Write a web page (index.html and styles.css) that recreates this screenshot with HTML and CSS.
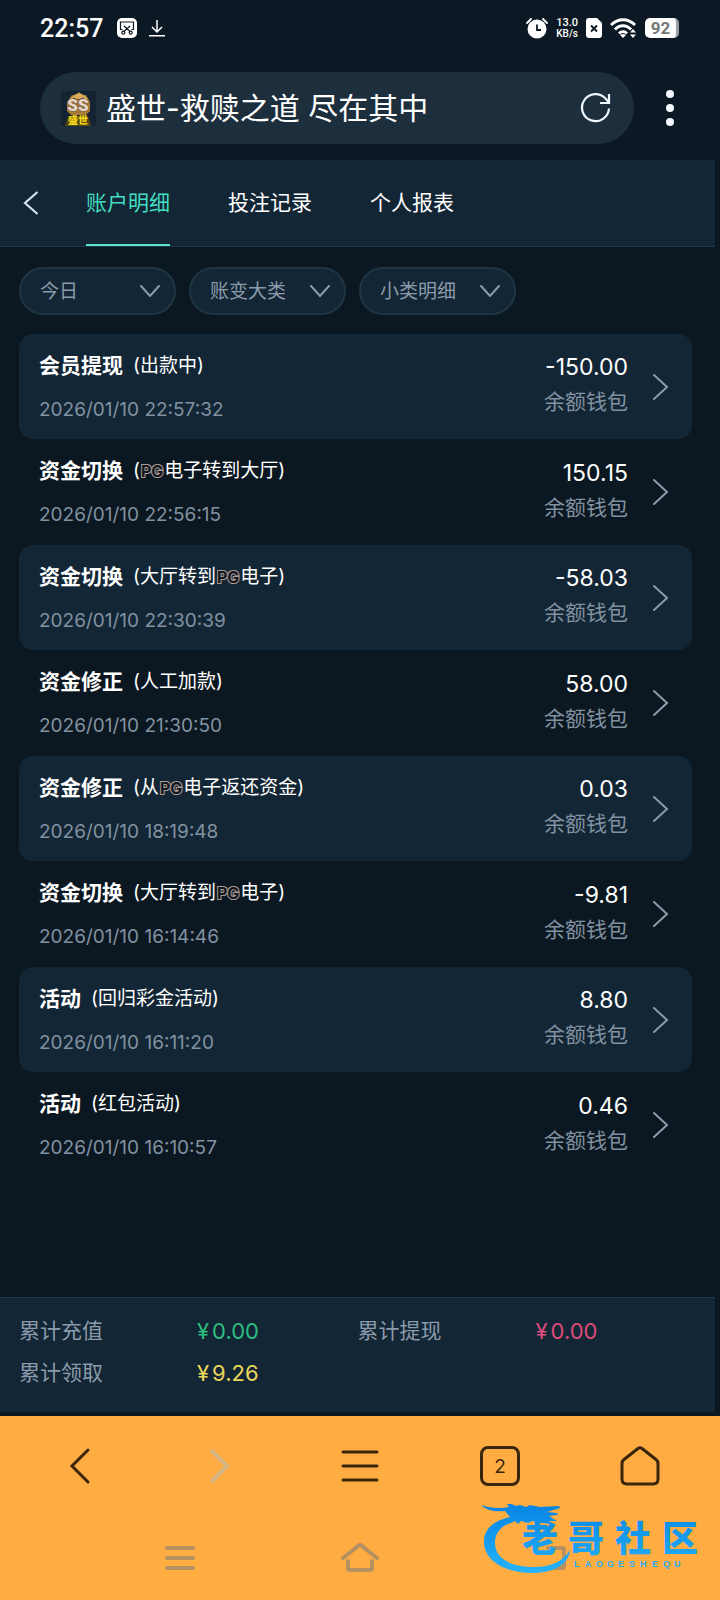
FILE: index.html
```html
<!DOCTYPE html>
<html lang="zh-CN">
<head>
<meta charset="UTF-8">
<meta name="viewport" content="width=device-width, initial-scale=1.0">
<title>账户明细</title>
<link rel="stylesheet" href="styles.css">
</head>
<body>

<div class="status-bar">
    <span class="clock">22:57</span>
    <svg class="clip-icon" width="20" height="20" viewBox="0 0 20 20">
        <rect width="20" height="20" rx="5" fill="#fff"/>
        <g fill="none" stroke="#0c1823" stroke-width="1.2">
            <path d="M5.5 11.5H3.5V4h13v7.5h-2M7 8l6 5.5M13 8l-6 5.5"/>
            <circle cx="6.3" cy="14.7" r="1.5"/><circle cx="13.7" cy="14.7" r="1.5"/>
        </g>
    </svg>
    <svg width="16" height="18" viewBox="0 0 16 18" fill="none" stroke="#fff" stroke-width="1.5">
        <path d="M8 1v12M3 8l5 5 5-5M0 16.7h16"/>
    </svg>
    <div class="status-right">
        <svg width="22" height="21" viewBox="0 0 22 21">
            <circle cx="11" cy="11" r="9.5" fill="#fff"/>
            <path d="M1 5l4-4M21 5l-4-4" stroke="#fff" stroke-width="1.8" stroke-linecap="round"/>
            <path d="M11 6.5V12h4" fill="none" stroke="#0c1823" stroke-width="1.8"/>
        </svg>
        <span class="net-speed"><b>13.0</b><span>KB/s</span></span>
        <svg width="16" height="20" viewBox="0 0 16 20">
            <path d="M3 0h8l5 5v12a3 3 0 0 1-3 3H3a3 3 0 0 1-3-3V3a3 3 0 0 1 3-3z" fill="#fff"/>
            <path d="M5 7.5l6 6M11 7.5l-6 6" stroke="#0c1823" stroke-width="1.8"/>
        </svg>
        <svg width="27" height="21" viewBox="0 0 27 21">
            <g fill="none" stroke="#fff" stroke-width="3">
                <path d="M1 7C8 0 18 0 25 7M5 11.500c4.500-5 11.500-5 16 0M9 15.500c2.500-2.500 5.500-2.500 8 0"/>
            </g>
            <path d="M13 20l-3-3q3-2 6 0z" fill="#fff"/>
            <path d="M20 14.500l3-3.500 3 3.500zM20 16.500l3 3.500 3-3.500z" fill="#fff"/>
        </svg>
        <span class="battery">92</span>
    </div>
</div>

<div class="address-row">
    <div class="address-bar">
        <svg class="favicon" width="35" height="35" viewBox="0 0 35 35">
            <rect width="35" height="35" fill="#132331"/>
            <path d="M6 11l5-7 3 1 4-4 4 4 3-1 4 7v9l-4 4H10l-4-4z" fill="#a87c35"/>
            <path d="M9 8l4-4 5-2 5 2 4 4-4 2H12z" fill="#d6ac58"/>
            <path d="M12 7l5 2 6-2" stroke="#51351b" fill="none"/>
            <text class="favicon-ss" x="17" y="20" text-anchor="middle">SS</text>
            <path d="M4 35l3-10h20l3 10z" fill="#57480d"/>
            <text class="favicon-name" x="17" y="33" text-anchor="middle">盛世</text>
        </svg>
        <span class="page-title">盛世-救赎之道 尽在其中</span>
        <button class="icon-btn" aria-label="刷新">
            <svg width="32" height="32" viewBox="0 0 32 32" fill="none" stroke="#f2f7fc" stroke-width="2.200">
                <path d="M29 16.500A13.500 13.500 0 1 1 25.500 6.500L29 10.500"/>
                <path d="M29 2v9h-9"/>
            </svg>
        </button>
    </div>
    <button class="icon-btn menu-btn" aria-label="菜单">
        <svg width="8" height="36" viewBox="0 0 8 36" fill="#f5f8ff">
            <circle cx="4" cy="4" r="4"/><circle cx="4" cy="18" r="4"/><circle cx="4" cy="32" r="4"/>
        </svg>
    </button>
</div>

<main class="page">
    <header class="page-header">
        <a class="back" href="#" aria-label="返回">
            <svg width="16" height="24" viewBox="0 0 16 24" fill="none" stroke="#d5e2ef" stroke-width="2.200">
                <path d="M14.500 1L2 12l12.500 11"/>
            </svg>
        </a>
        <nav class="tabs">
            <a class="tab active" href="#">账户明细</a>
            <a class="tab" href="#">投注记录</a>
            <a class="tab" href="#">个人报表</a>
        </nav>
    </header>

    <div class="filters">
        <label class="filter">
            <select aria-label="日期"><option>今日</option></select>
            <svg width="20" height="12" viewBox="0 0 20 12"><path d="M1 1l9 10 9-10"/></svg>
        </label>
        <label class="filter">
            <select aria-label="大类"><option>账变大类</option></select>
            <svg width="20" height="12" viewBox="0 0 20 12"><path d="M1 1l9 10 9-10"/></svg>
        </label>
        <label class="filter">
            <select aria-label="小类"><option>小类明细</option></select>
            <svg width="20" height="12" viewBox="0 0 20 12"><path d="M1 1l9 10 9-10"/></svg>
        </label>
    </div>

    <ul class="records">
        <li><a class="record" href="#">
            <div class="info">
                <p class="type"><strong>会员提现</strong><span>(出款中)</span></p>
                <time>2026/01/10 22:57:32</time>
            </div>
            <div class="sum"><span class="amount">-150.00</span><span class="wallet">余额钱包</span></div>
            <svg class="arrow" width="16" height="26" viewBox="0 0 16 26"><path d="M1 1l13 12L1 25"/></svg>
        </a></li>
        <li><a class="record" href="#">
            <div class="info">
                <p class="type"><strong>资金切换</strong><span>(<i class="pg">PG</i>电子转到大厅)</span></p>
                <time>2026/01/10 22:56:15</time>
            </div>
            <div class="sum"><span class="amount">150.15</span><span class="wallet">余额钱包</span></div>
            <svg class="arrow" width="16" height="26" viewBox="0 0 16 26"><path d="M1 1l13 12L1 25"/></svg>
        </a></li>
        <li><a class="record" href="#">
            <div class="info">
                <p class="type"><strong>资金切换</strong><span>(大厅转到<i class="pg">PG</i>电子)</span></p>
                <time>2026/01/10 22:30:39</time>
            </div>
            <div class="sum"><span class="amount">-58.03</span><span class="wallet">余额钱包</span></div>
            <svg class="arrow" width="16" height="26" viewBox="0 0 16 26"><path d="M1 1l13 12L1 25"/></svg>
        </a></li>
        <li><a class="record" href="#">
            <div class="info">
                <p class="type"><strong>资金修正</strong><span>(人工加款)</span></p>
                <time>2026/01/10 21:30:50</time>
            </div>
            <div class="sum"><span class="amount">58.00</span><span class="wallet">余额钱包</span></div>
            <svg class="arrow" width="16" height="26" viewBox="0 0 16 26"><path d="M1 1l13 12L1 25"/></svg>
        </a></li>
        <li><a class="record" href="#">
            <div class="info">
                <p class="type"><strong>资金修正</strong><span>(从<i class="pg">PG</i>电子返还资金)</span></p>
                <time>2026/01/10 18:19:48</time>
            </div>
            <div class="sum"><span class="amount">0.03</span><span class="wallet">余额钱包</span></div>
            <svg class="arrow" width="16" height="26" viewBox="0 0 16 26"><path d="M1 1l13 12L1 25"/></svg>
        </a></li>
        <li><a class="record" href="#">
            <div class="info">
                <p class="type"><strong>资金切换</strong><span>(大厅转到<i class="pg">PG</i>电子)</span></p>
                <time>2026/01/10 16:14:46</time>
            </div>
            <div class="sum"><span class="amount">-9.81</span><span class="wallet">余额钱包</span></div>
            <svg class="arrow" width="16" height="26" viewBox="0 0 16 26"><path d="M1 1l13 12L1 25"/></svg>
        </a></li>
        <li><a class="record" href="#">
            <div class="info">
                <p class="type"><strong>活动</strong><span>(回归彩金活动)</span></p>
                <time>2026/01/10 16:11:20</time>
            </div>
            <div class="sum"><span class="amount">8.80</span><span class="wallet">余额钱包</span></div>
            <svg class="arrow" width="16" height="26" viewBox="0 0 16 26"><path d="M1 1l13 12L1 25"/></svg>
        </a></li>
        <li><a class="record" href="#">
            <div class="info">
                <p class="type"><strong>活动</strong><span>(红包活动)</span></p>
                <time>2026/01/10 16:10:57</time>
            </div>
            <div class="sum"><span class="amount">0.46</span><span class="wallet">余额钱包</span></div>
            <svg class="arrow" width="16" height="26" viewBox="0 0 16 26"><path d="M1 1l13 12L1 25"/></svg>
        </a></li>
    </ul>

    <dl class="totals">
        <div><dt>累计充值</dt><dd class="green"><span>¥</span>0.00</dd></div>
        <div><dt>累计提现</dt><dd class="red"><span>¥</span>0.00</dd></div>
        <div><dt>累计领取</dt><dd class="yellow"><span>¥</span>9.26</dd></div>
    </dl>
</main>

<footer class="bottom">
    <nav class="browser-nav">
        <button aria-label="后退">
            <svg width="40" height="40" viewBox="0 0 40 40"><path d="M28 4L12 20l16 16"/></svg>
        </button>
        <button class="disabled" aria-label="前进" disabled>
            <svg width="40" height="40" viewBox="0 0 40 40"><path d="M11 4l16 16-16 16"/></svg>
        </button>
        <button aria-label="菜单">
            <svg width="40" height="40" viewBox="0 0 40 40"><path d="M3 6h34M3 20h34M3 34h34"/></svg>
        </button>
        <button class="tab-count" aria-label="标签页">2</button>
        <button aria-label="主页">
            <svg width="40" height="40" viewBox="0 0 40 40"><path d="M18 2.500q2-1.500 4 0l14 11q2 1.500 2 4V33q0 5-5 5H7q-5 0-5-5V17.500q0-2.500 2-4z"/></svg>
        </button>
    </nav>

    <div class="system-nav">
        <button aria-label="最近任务">
            <svg width="30" height="26" viewBox="0 0 30 26"><path d="M2 3h26M2 13h26M2 23h26"/></svg>
        </button>
        <button aria-label="桌面">
            <svg width="40" height="32" viewBox="0 0 40 32"><path d="M3 16L18 4q2-2 4 0l15 12M8 19v7q0 2 2 2h20q2 0 2-2v-7"/></svg>
        </button>
        <button aria-label="返回">
            <svg width="52" height="26" viewBox="0 0 52 26"><path d="M34 3h14q2 0 2 2v16q0 2-2 2H34"/></svg>
        </button>
    </div>

    <svg class="watermark" width="224" height="72" viewBox="0 0 224 72">
        <defs>
            <linearGradient id="blue" gradientUnits="userSpaceOnUse" x1="0" y1="4" x2="0" y2="68">
                <stop offset="0" stop-color="#0787e5"/>
                <stop offset="1" stop-color="#25b2fa"/>
            </linearGradient>
        </defs>
        <g fill="url(#blue)">
            <path d="M30 13C12 17 4 26 4 38c0 18 20 31 48 31 22 0 37-9 38-23-7 11-18 17-36 17-24 0-39-9-39-24 0-9 5-17 16-20l4-2 3 3 3-3 7 2 4-2 10 2 10 1-3-3h8l-8-5 7-1h2l-1-2-10-1 13-4-1-2-19 1-10-2-4 2-6-2-4 1-11-5 4 6c-9 2-20 1-28-2 6 6 15 7 24 6z"/>
            <text class="mark-cn" x="42 88 135 182" y="48">老哥社区</text>
            <text class="mark-en" x="94 105 116 127 138 149 160 172 183 194" y="63">LAOGESHEQU</text>
        </g>
    </svg>
</footer>

</body>
</html>
```

FILE: styles.css
```css
* {
    box-sizing: border-box;
}

body {
    margin: 0;
    min-height: 100vh;
    display: flex;
    flex-direction: column;
    background: #0c1823;
    color: #fff;
    font-family: Inter, "Noto Sans CJK SC", sans-serif;
    font-size: 21px;
}

a {
    color: inherit;
    text-decoration: none;
}

button {
    border: none;
    padding: 0;
    background: none;
    color: inherit;
    font: inherit;
    cursor: pointer;
}

svg {
    display: block;
    flex: none;
}

/* phone status bar */
.status-bar {
    display: flex;
    align-items: center;
    height: 56px;
    padding: 0 41px 0 40px;
    font-family: Roboto, sans-serif;
}

.clock {
    font-size: 25px;
    font-weight: 500;
}

.clip-icon {
    margin: 0 12px 0 14px;
}

.status-right {
    display: flex;
    align-items: center;
    gap: 8px;
    margin-left: auto;
}

.net-speed {
    display: flex;
    flex-direction: column;
    align-items: center;
    font-size: 10px;
    font-weight: 500;
    line-height: 11px;
}

.net-speed b {
    font-size: 11px;
    font-weight: 500;
}

.battery {
    width: 34px;
    height: 20px;
    border-radius: 5px;
    border-right: 3px solid #9a9fa4;
    background: #fff;
    color: #777;
    font-size: 17px;
    font-weight: 700;
    line-height: 20px;
    text-align: center;
}

/* browser address bar */
.address-row {
    display: flex;
    align-items: center;
    padding: 16px 46px 16px 40px;
}

.address-bar {
    flex: 1;
    display: flex;
    align-items: center;
    height: 72px;
    padding: 0 22px 0 21px;
    border-radius: 36px;
    background: #1d2e3d;
}

.favicon {
    overflow: visible;
}

.favicon-ss {
    font: 900 17px Roboto, sans-serif;
    fill: #e5d9ce;
    stroke: #705447;
    stroke-width: 1px;
    paint-order: stroke;
}

.favicon-name {
    font: 900 10px "Noto Sans CJK SC", sans-serif;
    fill: #f3d51c;
}

.page-title {
    flex: 1;
    margin-left: 10px;
    font-size: 30px;
    line-height: 40px;
    white-space: nowrap;
}

.menu-btn {
    margin-left: 32px;
}

/* page */
.page {
    flex: 1;
    display: flex;
    flex-direction: column;
    padding: 0 5px 4px 0;
    background: #0b1821;
}

.page-header {
    display: flex;
    align-items: center;
    height: 87px;
    padding-left: 23px;
    border-bottom: 1px solid #20394a;
    background: #132635;
}

.tabs {
    display: flex;
    gap: 58px;
    height: 86px;
    margin-left: 47px;
}

.tab {
    padding-top: 2px;
    border-bottom: 2px solid transparent;
    line-height: 82px;
}

.tab.active {
    border-color: #5ee3cf;
    color: #42dcc0;
}

.filters {
    display: flex;
    gap: 13px;
    padding: 20px 19px 19px;
}

.filter {
    display: grid;
    align-items: center;
    width: 157px;
    height: 48px;
    border: 2px solid #203543;
    border-radius: 24px;
    background: #132635;
}

.filter select,
.filter svg {
    grid-area: 1 / 1;
}

.filter select {
    appearance: none;
    width: 100%;
    height: 100%;
    border: none;
    padding: 0 0 0 19px;
    background: none;
    color: #8b9bab;
    font: inherit;
    font-size: 19px;
}

.filter svg {
    justify-self: end;
    margin-right: 14px;
    pointer-events: none;
}

.filter path,
.arrow path {
    fill: none;
    stroke: #8b9bab;
    stroke-width: 2;
    stroke-linecap: round;
}

.records {
    flex: 1;
    list-style: none;
    margin: 0;
    padding: 0 23px 0 19px;
}

.record {
    display: flex;
    align-items: center;
    height: 106px;
    padding: 0 23px 0 20px;
    border-radius: 14px;
}

li:nth-child(odd) .record {
    height: 105px;
    background: #132635;
}

.info {
    flex: 1;
    padding-top: 2px;
}

.type {
    display: flex;
    align-items: center;
    gap: 10px;
    margin: 0 0 16px;
    line-height: 28px;
}

.type span {
    font-size: 19px;
}

.pg {
    padding: 0 1px;
    color: #111820;
    font: 700 16px Inter, sans-serif;
    -webkit-text-stroke: 2px #a89a93;
    paint-order: stroke;
}

time {
    display: block;
    color: #8292a1;
    font-size: 19px;
    line-height: 28px;
}

.sum {
    display: flex;
    flex-direction: column;
    align-items: flex-end;
    padding-bottom: 5px;
}

.amount {
    font-size: 23px;
    line-height: 36px;
}

.wallet {
    color: #8292a1;
    line-height: 34px;
}

.arrow {
    margin-left: 25px;
}

/* totals */
.totals {
    display: grid;
    grid-template-columns: 1fr 1fr;
    align-content: start;
    height: 115px;
    margin: 0;
    padding: 12px 19px;
    border-top: 1px solid #20394a;
    background: #132635;
    line-height: 42px;
}

.totals div {
    display: grid;
    grid-template-columns: 178px 1fr;
}

.totals dt {
    color: #8b9bab;
}

.totals dd {
    margin: 0;
    font-size: 22px;
}

.totals dd span {
    margin-right: 3px;
}

.green {
    color: #2fbd80;
}

.red {
    color: #dc4c7c;
}

.yellow {
    color: #ecd65a;
}

/* bottom bars */
.bottom {
    position: relative;
    background: #ffad42;
}

.browser-nav {
    display: grid;
    grid-template-columns: repeat(5, 1fr);
    align-items: center;
    justify-items: center;
    height: 100px;
    padding: 0 10px;
}

.browser-nav path {
    fill: none;
    stroke: #3a260d;
    stroke-width: 3;
    stroke-linecap: round;
}

.browser-nav .disabled path {
    stroke: #d4b583;
    stroke-width: 4;
    stroke-linecap: butt;
}

.tab-count {
    width: 40px;
    height: 40px;
    border: 3px solid #3a260d;
    border-radius: 8px;
    color: #3a260d;
    font-size: 19px;
}

.system-nav {
    display: grid;
    grid-template-columns: repeat(3, 1fr);
    align-items: center;
    justify-items: center;
    height: 84px;
    padding: 0 90px;
}

.system-nav path {
    fill: none;
    stroke: #b79062;
    stroke-width: 4;
    stroke-linecap: round;
}

.watermark {
    position: absolute;
    right: 16px;
    bottom: 24px;
}

.mark-cn {
    font: 900 36px "Noto Sans CJK SC", sans-serif;
}

.mark-en {
    font: 700 9px "Liberation Sans", sans-serif;
}
```
